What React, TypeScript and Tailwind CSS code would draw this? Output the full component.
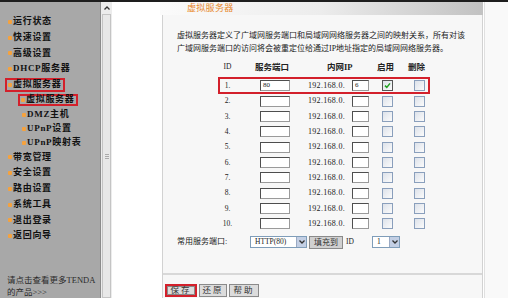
import React from 'react';

interface NavItem {
  label: string;
  sub?: boolean;
  active?: boolean;
  h: string;
}

const navItems: NavItem[] = [
  { label: '运行状态', h: 'h-[16px]' },
  { label: '快速设置', h: 'h-[16px]' },
  { label: '高级设置', h: 'h-[16px]' },
  { label: 'DHCP服务器', h: 'h-[16px]' },
  { label: '虚拟服务器', h: 'h-[16px]', active: true },
  { label: '虚拟服务器', h: 'h-[15px]', sub: true, active: true },
  { label: 'DMZ主机', h: 'h-[15px]', sub: true },
  { label: 'UPnP设置', h: 'h-[14px]', sub: true },
  { label: 'UPnP映射表', h: 'h-[14px]', sub: true },
  { label: '带宽管理', h: 'h-[16px]' },
  { label: '安全设置', h: 'h-[16px]' },
  { label: '路由设置', h: 'h-[16px]' },
  { label: '系统工具', h: 'h-[16px]' },
  { label: '退出登录', h: 'h-[16px]' },
  { label: '返回向导', h: 'h-[16px]' },
];

// row heights alternate a bit so ten rows span ~15.4px pitch like the original
const rowHeights = ['h-[15px]', 'h-[16px]', 'h-[15px]', 'h-[15px]', 'h-[16px]', 'h-[15px]', 'h-[15px]', 'h-[16px]', 'h-[15px]', 'h-[15px]'];

const Dot = () => <span className="w-[4px] h-[4px] bg-[#f5a23e] rounded-[1px] mr-[1px] shrink-0" />;

const Checkbox: React.FC<{ checked?: boolean }> = ({ checked }) => (
  <span
    className={`w-[11px] h-[11px] flex items-center justify-center bg-linear-to-br from-[#dde2ea] to-[#fbfbfb] border ${
      checked ? 'border-[#555]' : 'border-[#8a9fbc]'
    }`}
  >
    {checked && (
      <svg width="7" height="7" viewBox="0 0 7 7">
        <path d="M1 3.6 L2.8 5.4 L6 1.4" fill="none" stroke="#21a121" strokeWidth="1.5" />
      </svg>
    )}
  </span>
);

const TextBox: React.FC<{ value?: string; w: string }> = ({ value, w }) => (
  <span
    className={`${w} h-[11px] block bg-white border border-[#4e4e4e] border-r-[#9a9a9a] border-b-[#9a9a9a] text-[7px] leading-[8px] pl-[2px] text-[#222]`}
  >
    {value}
  </span>
);

const Arrow = () => (
  <span className="w-[10px] h-full bg-[#c3cfe4] border-l border-[#9aaac4] flex items-center justify-center">
    <svg width="6" height="4" viewBox="0 0 6 4">
      <path d="M0.5 0.5 L3 3 L5.5 0.5" fill="none" stroke="#333" strokeWidth="1.3" />
    </svg>
  </span>
);

const Sidebar = () => (
  <div className="w-[100px] bg-[#a8a8a8] flex flex-col pt-[12px] shrink-0">
    {navItems.map((item, i) => (
      <div key={i} className={`${item.h} flex items-center`}>
        {item.active ? (
          <span
            className={`inline-flex items-center border-2 border-[#d3202b] pl-[1px] pr-[1px] ${
              item.sub ? 'ml-[18px] h-[12px]' : 'ml-[5px] h-[14px]'
            }`}
          >
            <Dot />
            <span className="text-[9px] font-bold tracking-[0.7px] text-[#111] whitespace-nowrap">{item.label}</span>
          </span>
        ) : (
          <span className={`inline-flex items-center ${item.sub ? 'ml-[22px]' : 'ml-[8px]'}`}>
            <Dot />
            <span className="text-[9px] font-bold tracking-[0.7px] text-[#111] whitespace-nowrap">{item.label}</span>
          </span>
        )}
      </div>
    ))}
    <div className="mt-[30px] pl-[7px] text-[8.5px] leading-[12px] text-[#2b2b2b] whitespace-nowrap">
      <div>请点击查看更多TENDA</div>
      <div>的产品&gt;&gt;&gt;</div>
    </div>
  </div>
);

const Scrollbar = () => (
  <div className="w-[12px] bg-[#ececec] border-l border-[#8c8c8c] flex flex-col shrink-0">
    <div className="h-[11px] flex items-center justify-center">
      <svg width="6" height="4" viewBox="0 0 6 4">
        <path d="M0.5 3.5 L3 1 L5.5 3.5" fill="none" stroke="#333" strokeWidth="1.3" />
      </svg>
    </div>
    <div className="flex-1 mx-[1px] mt-[1px] border border-[#c4c4c4] bg-[#e8e8e8] flex items-center justify-center">
      <div className="flex flex-col gap-[1px]">
        <span className="w-[4px] h-[1px] bg-[#aaa]" />
        <span className="w-[4px] h-[1px] bg-[#aaa]" />
        <span className="w-[4px] h-[1px] bg-[#aaa]" />
      </div>
    </div>
  </div>
);

const App: React.FC = () => {
  return (
    <div className="w-[508px] h-[298px] overflow-hidden flex flex-col bg-white font-['Liberation_Serif','Noto_Sans_CJK_SC',serif] text-[#222]">
      <div className="h-[2px] bg-[#1e1e1e] shrink-0" />
      <div className="flex-1 flex min-h-0">
        <Sidebar />
        <Scrollbar />
        <div className="w-[48px] bg-white shrink-0" />

        {/* Main panel */}
        <div className="w-[323px] flex flex-col shrink-0">
          <div className="h-[13px] bg-linear-to-r from-[#fbfbfb] via-[#ececec] to-[#c2c2c2] flex items-center pl-[27px] shrink-0">
            <span className="text-[9px] text-[#e8892c] tracking-[0.3px]">虚拟服务器</span>
          </div>
          <div className="flex-1 ml-[2px] border-l border-r border-[#d2d2d2] bg-[#f7f7f7] flex flex-col">
            <div className="pt-[14px] pl-[14px] text-[8px] leading-[13px] whitespace-nowrap">
              <div>虚拟服务器定义了广域网服务端口和局域网网络服务器之间的映射关系，所有对该</div>
              <div>广域网服务端口的访问将会被重定位给通过IP地址指定的局域网网络服务器。</div>
            </div>

            {/* table header */}
            <div className="mt-[6px] ml-[56px] pl-[2px] h-[12px] flex items-center text-[8.5px] whitespace-nowrap">
              <span className="w-[13px] text-center text-[7.5px]">ID</span>
              <span className="ml-[21px] w-[35px] font-bold">服务端口</span>
              <span className="ml-[37px] w-[26px] font-bold">内网IP</span>
              <span className="ml-[24px] w-[14px] font-bold">启用</span>
              <span className="ml-[17px] w-[16px] font-bold">删除</span>
            </div>

            {/* rows */}
            <div className="mt-[5px] flex flex-col">
              {rowHeights.map((h, i) => (
                <div
                  key={i}
                  className={`${h} ml-[56px] w-[210px] pl-[2px] flex items-center ${
                    i === 0 ? 'outline-2 outline-[#d3202b] outline-offset-[-1px]' : ''
                  }`}
                >
                  <span className="w-[13px] text-center text-[7.5px]">{i + 1}.</span>
                  <span className="ml-[26px]">
                    <TextBox w="w-[30px]" value={i === 0 ? '80' : ''} />
                  </span>
                  <span className="ml-[18px] w-[44px] text-[8px] tracking-[0.3px] whitespace-nowrap">192.168.0.</span>
                  <TextBox w="w-[17px]" value={i === 0 ? '6' : ''} />
                  <span className="ml-[13px]">
                    <Checkbox checked={i === 0} />
                  </span>
                  <span className="ml-[21px]">
                    <Checkbox />
                  </span>
                </div>
              ))}
            </div>

            {/* common ports */}
            <div className="mt-[4px] ml-[14px] h-[14px] flex items-center whitespace-nowrap">
              <span className="w-[73px] text-[8px]">常用服务端口:</span>
              <span className="w-[57px] h-[12px] bg-white border border-[#7f9db9] flex">
                <span className="flex-1 pl-[4px] text-[7.5px] leading-[10px]">HTTP(80)</span>
                <Arrow />
              </span>
              <span className="ml-[2px] w-[34px] h-[13px] bg-[#d0d0d0] border border-[#8a8a8a] text-[8px] leading-[11px] text-center text-[#333]">
                填充到
              </span>
              <span className="ml-[3px] w-[26px] text-[7.5px]">ID</span>
              <span className="w-[28px] h-[12px] bg-white border border-[#7f9db9] flex">
                <span className="flex-1 pl-[4px] text-[7.5px] leading-[10px]">1</span>
                <Arrow />
              </span>
            </div>

            <div className="mt-[24px] h-[2px] bg-[#d8d8d8]" />

            {/* buttons */}
            <div className="mt-[9px] pl-[2px] flex gap-[2px] text-[8.5px] text-[#333]">
              <span className="w-[32px] h-[13px] border-2 border-[#d3202b] flex">
                <span className="flex-1 bg-[#dcdcdc] border border-[#8a8a8a] flex items-center justify-center tracking-[2px]">保存</span>
              </span>
              <span className="w-[28px] h-[13px] bg-[#dcdcdc] border border-[#8a8a8a] flex items-center justify-center tracking-[2px]">还原</span>
              <span className="w-[30px] h-[13px] bg-[#dcdcdc] border border-[#8a8a8a] flex items-center justify-center tracking-[2px]">帮助</span>
            </div>
          </div>
        </div>

        <div className="flex-1 bg-[#f9f9f9] border-l border-[#e0e0e0] ml-[1px]" />
      </div>
    </div>
  );
};

export default App;
